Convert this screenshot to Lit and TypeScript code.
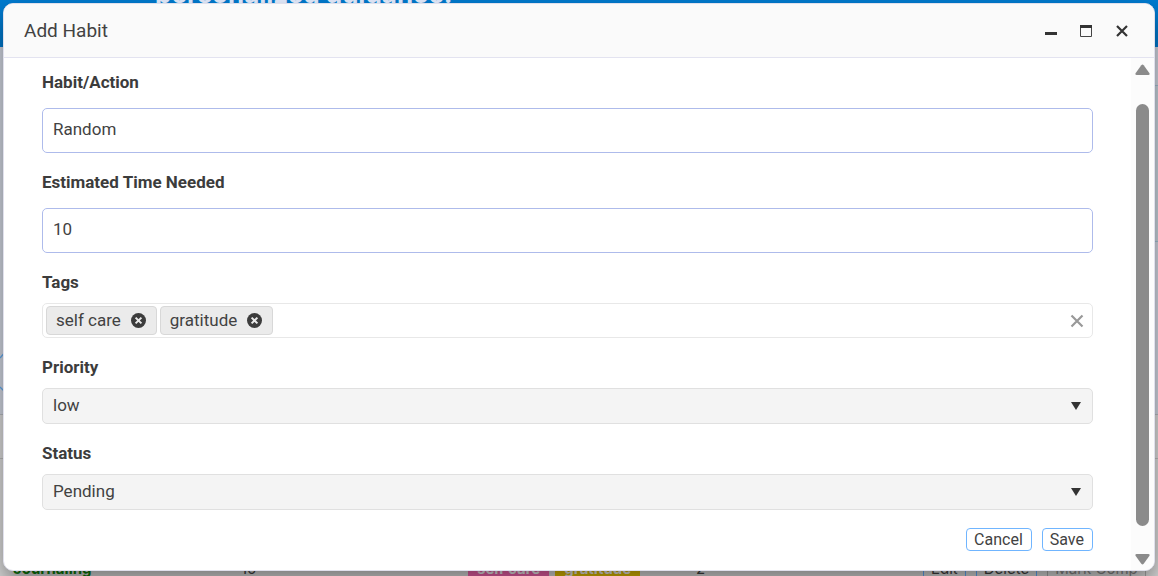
import { LitElement, html, css } from "lit";
import { customElement, state } from "lit/decorators.js";

@customElement("app-root")
export class AppRoot extends LitElement {
  @state() private tags = ["self care", "gratitude"];

  static styles = css`
    :host {
      display: block;
      position: relative;
      height: 100vh;
      overflow: hidden;
      font: 16px/24px Roboto, sans-serif;
      color: #424242;
    }
    * { box-sizing: border-box; }
    button, input, select { font: inherit; color: inherit; }
    button { cursor: pointer; }

    .page {
      display: flex;
      flex-direction: column;
      height: 100%;
      background: #dcdcdc;
      font-family: Inter, sans-serif;
      font-size: 15px;
    }
    .banner {
      display: flex;
      align-items: flex-start;
      flex: 0 0 47px;
      padding-left: 155px;
      overflow: hidden;
      background: #007bd0;
    }
    .banner h2 {
      margin: -24px 0 0;
      font-size: 26px;
      line-height: 36px;
      font-weight: 700;
      color: #e6eeff;
    }
    .panel {
      display: flex;
      justify-content: space-between;
      flex: 0 0 368px;
      background: #d2d7e2;
      border-bottom: 1px solid #b8bcc2;
    }
    .panel svg { margin-top: 304px; }
    .card {
      width: 12px;
      height: 157px;
      margin-top: 38px;
      border: solid #a5bfd2;
      border-width: 1px 0;
      background: #c8d3dd;
    }
    .head { flex: 0 0 44px; border-bottom: 1px solid #bdbdbd; }
    .row {
      display: grid;
      grid-template-columns: 228px 227px 228px 227px 1fr;
      align-items: center;
      padding: 98px 0 0 13px;
      line-height: 24px;
      white-space: nowrap;
    }
    .name { color: #0a7d0a; font-weight: 700; }
    .badges { display: flex; gap: 6px; color: #eee; font-weight: 700; }
    .badge { padding: 0 9px; background: #ee62aa; }
    .badge.gold { background: #e0bb00; }
    .actions { display: flex; gap: 10px; }
    .actions button {
      height: 24px;
      padding: 0 7px;
      border: 1px solid #62aaff;
      background: none;
      line-height: 20px;
    }
    .actions button:disabled { border-color: #aaa; color: #888; }

    .dialog {
      position: absolute;
      inset: 3px 3px 5px;
      display: flex;
      flex-direction: column;
      overflow: hidden;
      border: 1px solid #e0e0ec;
      border-radius: 10px;
      background: #fff;
      box-shadow: 0 12px 25px rgba(0, 0, 0, 0.45);
    }
    header {
      display: flex;
      align-items: center;
      justify-content: space-between;
      flex: 0 0 54px;
      padding: 0 20px;
      background: #fafafa;
      border-bottom: 1px solid #e3e3f0;
    }
    h1 { margin: 0; font-size: 19px; line-height: 24px; font-weight: 400; }
    .tools { display: flex; gap: 11px; }
    .tools button {
      display: grid;
      place-items: center;
      width: 25px;
      height: 25px;
      padding: 0;
      border: 0;
      background: none;
    }
    svg { display: block; }

    .body { display: flex; flex: 1; min-height: 0; }
    form {
      flex: 1;
      min-width: 0;
      display: flex;
      flex-direction: column;
      gap: 17px;
      padding: 12px 38px 0;
      font-size: 17px;
    }
    .field { display: flex; flex-direction: column; gap: 9px; }
    .field.tall { gap: 14px; }
    .field label { font-weight: 700; color: #3c3c3c; }
    .field.tall input {
      width: 100%;
      height: 45px;
      padding: 0 10px 4px;
      border: 1px solid #aebbeb;
      border-radius: 5px;
      background: #fff;
    }
    .tagbox {
      display: flex;
      align-items: center;
      gap: 3px;
      height: 35px;
      padding: 0 8px 0 3px;
      border: 1px solid #e8e8e8;
      border-radius: 5px;
    }
    .tag {
      display: flex;
      align-items: center;
      gap: 10px;
      height: 29px;
      padding: 0 10px 1px 9px;
      border: 1px solid #d8d8d8;
      border-radius: 4px;
      background: #ebebeb;
    }
    .icon { padding: 0; border: 0; background: none; }
    .tagbox input { flex: 1; min-width: 0; border: 0; outline: 0; background: none; }
    .select { display: grid; align-items: center; }
    .select > * { grid-area: 1 / 1; }
    .select svg { justify-self: end; margin-right: 12px; pointer-events: none; }
    select {
      appearance: none;
      width: 100%;
      height: 36px;
      padding: 0 10px 3px;
      border: 1px solid #e0e0e0;
      border-radius: 5px;
      background: #f4f4f4;
    }
    .footer {
      display: flex;
      justify-content: flex-end;
      gap: 10px;
      padding-top: 1px;
      font-size: 16px;
    }
    .footer button {
      height: 23px;
      padding: 0 8px 0 7px;
      border: 1px solid #70b5ff;
      border-radius: 4px;
      background: #fff;
      line-height: 20px;
    }

    .scroll {
      display: flex;
      flex-direction: column;
      align-items: center;
      width: 23px;
      padding: 6px 0 5px;
      background: #fcfcfc;
    }
    .track { flex: 1; width: 13px; padding: 28px 0 27px; }
    .thumb { height: 100%; border-radius: 7px; background: #8b8b8b; }
  `;

  private removeTag(tag: string) {
    this.tags = this.tags.filter((t) => t !== tag);
  }

  private renderSelect(id: string, label: string, options: string[]) {
    return html`
      <div class="field">
        <label for=${id}>${label}</label>
        <div class="select">
          <select id=${id}>
            ${options.map((o) => html`<option>${o}</option>`)}
          </select>
          <svg width="10" height="8" viewBox="0 0 10 8"><path d="M0 0h10L5 8z" fill="#333" /></svg>
        </div>
      </div>
    `;
  }

  render() {
    return html`
      <div class="page">
        <div class="banner"><h2>personalized guidance.</h2></div>
        <div class="panel">
          <svg width="8" height="46" viewBox="0 0 8 46" fill="none" stroke="#62aaee" stroke-width="1.3">
            <path d="M0 7L6 0M0 36l6 6" />
          </svg>
          <div class="card"></div>
        </div>
        <div class="head"></div>
        <div class="row">
          <span class="name">Journaling</span>
          <span>10</span>
          <span class="badges"><span class="badge">self care</span><span class="badge gold">gratitude</span></span>
          <span>2</span>
          <span class="actions">
            <button>Edit</button><button>Delete</button><button disabled>Mark Comp</button>
          </span>
        </div>
      </div>

      <section class="dialog" role="dialog" aria-labelledby="title">
        <header>
          <h1 id="title">Add Habit</h1>
          <div class="tools">
            <button aria-label="Minimize">
              <svg width="14" height="14" viewBox="0 0 14 14"><path d="M2 8h12v3H2z" fill="#333" /></svg>
            </button>
            <button aria-label="Maximize">
              <svg width="14" height="14" viewBox="0 0 14 14">
                <path d="M1.5 1.5h11v11h-11z" fill="none" stroke="#444" />
                <path d="M1 1h12v3H1z" fill="#333" />
              </svg>
            </button>
            <button aria-label="Close">
              <svg width="14" height="14" viewBox="0 0 14 14">
                <path d="M2 2l10 10M12 2L2 12" fill="none" stroke="#333" stroke-width="2.2" />
              </svg>
            </button>
          </div>
        </header>
        <div class="body">
          <form @submit=${(e: Event) => e.preventDefault()}>
            <div class="field tall">
              <label for="habit">Habit/Action</label>
              <input id="habit" type="text" value="Random" />
            </div>
            <div class="field tall">
              <label for="time">Estimated Time Needed</label>
              <input id="time" type="text" inputmode="numeric" value="10" />
            </div>
            <div class="field">
              <label for="tags">Tags</label>
              <div class="tagbox">
                ${this.tags.map(
                  (tag) => html`
                    <span class="tag">
                      ${tag}
                      <button class="icon" type="button" aria-label="Remove ${tag}" @click=${() => this.removeTag(tag)}>
                        <svg width="15" height="15" viewBox="0 0 15 15">
                          <circle cx="7.5" cy="7.5" r="7.5" fill="#3c3c3c" />
                          <path d="M4.6 4.6l5.8 5.8M10.4 4.6l-5.8 5.8" stroke="#ebebeb" stroke-width="2" />
                        </svg>
                      </button>
                    </span>
                  `
                )}
                <input id="tags" type="text" />
                <button class="icon" type="button" aria-label="Clear" @click=${() => (this.tags = [])}>
                  <svg width="14" height="14" viewBox="0 0 14 14">
                    <path d="M1.5 1.5l11 11M12.5 1.5l-11 11" stroke="#999" stroke-width="2.2" />
                  </svg>
                </button>
              </div>
            </div>
            ${this.renderSelect("priority", "Priority", ["low", "medium", "high"])}
            ${this.renderSelect("status", "Status", ["Pending", "Completed"])}
            <div class="footer">
              <button type="button">Cancel</button>
              <button type="submit">Save</button>
            </div>
          </form>
          <div class="scroll" aria-hidden="true">
            <svg width="15" height="12" viewBox="0 0 15 12">
              <path d="M6.3 1.2q1.2-1.4 2.4 0L14.3 9q1 2-1 2H1.7q-2 0-1-2z" fill="#8b8b8b" />
            </svg>
            <div class="track"><div class="thumb"></div></div>
            <svg width="15" height="12" viewBox="0 0 15 12">
              <path d="M6.3 10.8q1.2 1.4 2.4 0L14.3 3q1-2-1-2H1.7q-2 0-1 2z" fill="#8b8b8b" />
            </svg>
          </div>
        </div>
      </section>
    `;
  }
}
